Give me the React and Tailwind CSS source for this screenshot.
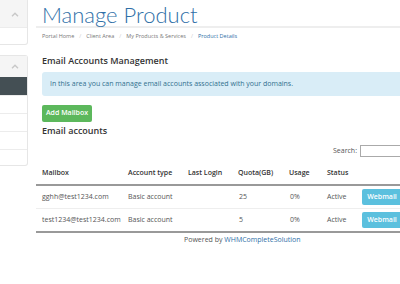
import React from 'react';

const rows = [
  { mailbox: 'gghh@test1234.com', type: 'Basic account', login: '', quota: '25', usage: '0%', status: 'Active' },
  { mailbox: 'test1234@test1234.com', type: 'Basic account', login: '', quota: '5', usage: '0%', status: 'Active' },
];

const Chevron = () => (
  <svg width="8" height="5" viewBox="0 0 8 5" className="text-[#c8c8c8]">
    <path d="M1 4.2 L4 1.2 L7 4.2" fill="none" stroke="currentColor" strokeWidth="1.4" />
  </svg>
);

export default function App() {
  return (
    <div className="w-[400px] h-[284px] overflow-hidden bg-white flex font-['Open_Sans',sans-serif] text-[#555]">
      {/* sidebar */}
      <div className="w-[28px] shrink-0 flex flex-col gap-[10px] -mt-[2px]">
        <div className="border border-l-0 border-[#e6e6e6] rounded-r-[3px]">
          <div className="h-[28px] bg-[#f5f5f5] flex items-center justify-end pr-[8px] pt-[2px]">
            <Chevron />
          </div>
          <div className="h-[17px] border-t border-[#ececec]"></div>
        </div>
        <div className="border border-l-0 border-[#e6e6e6] rounded-r-[3px]">
          <div className="h-[21px] bg-[#f5f5f5] flex items-center justify-end pr-[8px]">
            <Chevron />
          </div>
          <div className="h-[18px] bg-[#444f54]"></div>
          <div className="h-[18px] border-t border-[#ececec]"></div>
          <div className="h-[18px] border-t border-[#ececec]"></div>
          <div className="h-[18px] border-t border-[#ececec]"></div>
          <div className="h-[16px] border-t border-[#ececec]"></div>
        </div>
      </div>

      {/* main */}
      <div className="flex-1 pl-[8px] min-w-0">
        <div className="pl-[6px] pt-[4px] h-[28px] border-b-[2px] border-[#eeeeee]">
          <h1 className="font-['Lato',sans-serif] font-light text-[22px] leading-[22px] text-[#2f6fa7] whitespace-nowrap">Manage Product</h1>
        </div>
        <div className="pl-[6px] mt-[4px] text-[5.5px] text-[#777] whitespace-nowrap flex gap-[5px]">
          <span>Portal Home</span><span className="text-[#ccc]">/</span>
          <span>Client Area</span><span className="text-[#ccc]">/</span>
          <span>My Products &amp; Services</span><span className="text-[#ccc]">/</span>
          <span className="text-[#2f6fa7]">Product Details</span>
        </div>
        <div className="pl-[6px] mt-[14px] text-[9px] font-semibold text-[#333] whitespace-nowrap">Email Accounts Management</div>
        <div className="ml-[6px] mt-[4px] h-[24px] bg-[#d9edf7] rounded-l-[3px] flex items-center pl-[8px] text-[7px] text-[#31708f] whitespace-nowrap">
          In this area you can manage email accounts associated with your domains.
        </div>
        <div className="pl-[6px] mt-[9px] flex">
          <button className="h-[17px] w-[50px] bg-[#5cb85c] rounded-[2px] text-white text-[7px] font-semibold">Add Mailbox</button>
        </div>
        <div className="pl-[6px] mt-[2px] text-[9px] leading-[14px] font-semibold text-[#333] whitespace-nowrap">Email accounts</div>
        <div className="flex justify-end items-center gap-[3px] mt-[7px] text-[7px] text-[#555]">
          <span>Search:</span>
          <div className="w-[40px] h-[12px] border border-[#aaa] border-r-0"></div>
        </div>
        <table className="table-fixed mt-[5px] w-[370px] text-[7px] text-[#555] border-collapse whitespace-nowrap">
          <thead>
            <tr className="h-[23px] border-b-[2px] border-[#999] text-[#333]">
              <th className="text-left font-semibold pl-[6px] w-[92px]">Mailbox</th>
              <th className="text-left font-semibold w-[60px]">Account type</th>
              <th className="text-left font-semibold w-[50px]">Last Login</th>
              <th className="text-left font-semibold w-[51px]">Quota(GB)</th>
              <th className="text-left font-semibold w-[38px]">Usage</th>
              <th className="text-left font-semibold w-[35px]">Status</th>
              <th></th>
            </tr>
          </thead>
          <tbody>
            {rows.map((r, i) => (
              <tr key={r.mailbox} className={i === 0 ? 'h-[24px] border-b border-[#eee]' : 'h-[23px] border-b-[2px] border-[#999]'}>
                <td className="pl-[6px] text-[#555]">{r.mailbox}</td>
                <td className="text-[#555]">{r.type}</td>
                <td>{r.login}</td>
                <td className="pl-[1px] text-[#555]">{r.quota}</td>
                <td className="pl-[1px] text-[#555]">{r.usage}</td>
                <td className="text-[#555]">{r.status}</td>
                <td>
                  <div className="h-[16px] w-[40px] bg-[#5bc0de] rounded-[2px] text-white text-[7px] font-semibold flex items-center justify-center">Webmail</div>
                </td>
              </tr>
            ))}
          </tbody>
        </table>
        <div className="mt-[2px] text-[7px] text-[#555] whitespace-nowrap pl-[148px]">
          Powered by <span className="text-[#2f6fa7]">WHMCompleteSolution</span>
        </div>
      </div>
    </div>
  );
}
